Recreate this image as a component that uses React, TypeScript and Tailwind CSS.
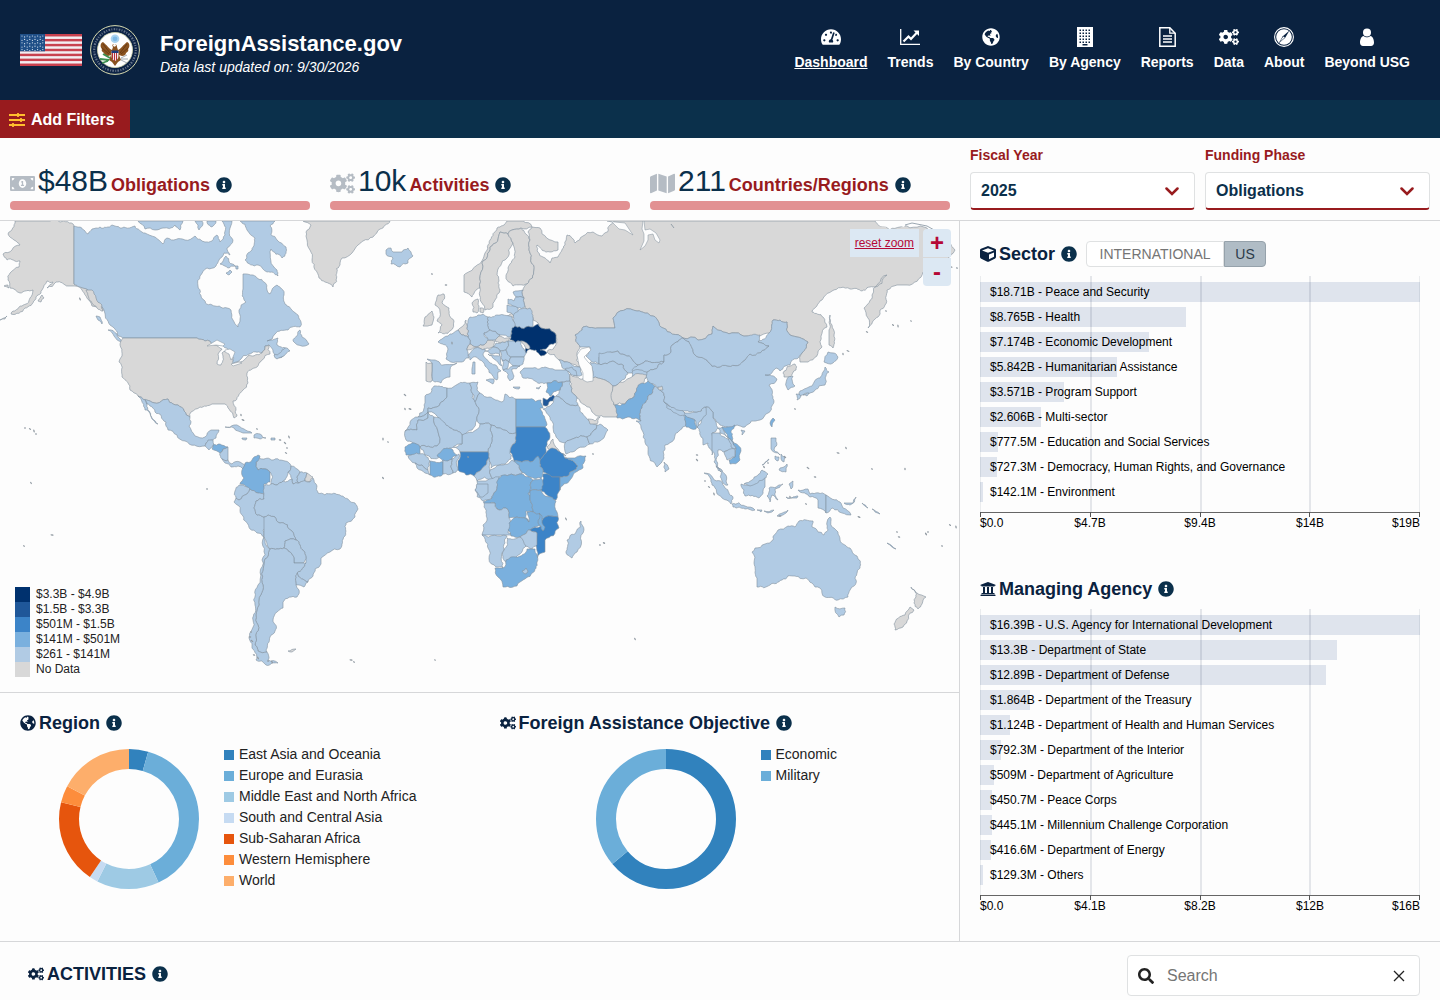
import React from "react";
import {
  FaCogs,
  FaCube,
  FaGlobeAmericas,
  FaInfoCircle,
  FaMap,
  FaMoneyBillAlt,
  FaSearch,
  FaTachometerAlt,
  FaUniversity,
} from "react-icons/fa";

const NONE = "#d8d8d8";
const L1 = "#b1cbe4";
const L2 = "#7ab0de";
const L3 = "#3c84c8";
const L4 = "#1f5799";
const L5 = "#00316e";

// [fill, outline]
const countries: [string, string][] = [
  // north america
  [NONE, "15,221 8,234 14,240 20,245 12,250 3,254 7,260 20,261 19,267 10,273 8,280 10,288 20,293 33,290 30,298 22,306 11,314 25,308 35,300 42,290 47,281 53,282 47,288 56,282 68,286 75,286 82,290 86,296 92,306 103,311 103,304 92,292 85,288 74,284 74,226 60,222 50,221"],
  [NONE, "0,320 7,316 5,319"],
  [NONE, "38,301 42,295 44,298 41,302"],
  [NONE, "4,286 8,285 9,288"],
  [L1, "74,226 85,231 88,234 92,229 100,227 112,225 120,228 135,226 145,233 155,237 163,244 167,238 185,240 195,236 205,242 212,241 217,235 220,242 225,235 222,221 232,221 233,240 227,248 230,255 224,253 219,260 216,266 207,268 200,276 198,286 204,300 215,306 231,310 233,320 238,327 240,319 239,310 246,302 243,289 243,274 253,275 264,282 267,290 270,294 277,285 284,295 287,306 294,312 301,322 300,327 288,330 275,334 267,341 278,338 277,345 288,350 276,358 273,352 269,345 265,346 262,353 249,354 240,360 230,363 234,358 228,349 214,345 205,341 197,338 123,338 118,336 110,325 104,310 98,303 88,290 80,287 74,284"],
  [L1, "240,221 275,221 270,226 277,240 286,247 282,258 271,249 277,270 278,276 267,272 258,265 245,260 252,250 255,238 247,230"],
  [L1, "138,221 145,229 155,230 163,228 175,225 180,230 183,221"],
  [L1, "195,221 199,230 203,224 202,221"],
  [L1, "207,221 211,227 216,221"],
  [L1, "220,264 226,256 235,266 228,268"],
  [L1, "226,273 230,270 232,272 229,275"],
  [L1, "235,266 238,266 238,269 236,269"],
  [L1, "293,341 300,330 302,337 309,344 305,346 295,343"],
  [L1, "274,355 285,348 290,351 277,359"],
  [L1, "108,330 117,334 122,342 114,336"],
  [L1, "96,316 100,317 102,324 98,320"],
  [NONE, "86,290 92,290 96,298 102,305 103,311 97,308 92,303"],
  [NONE, "123,338 197,338 205,341 214,345 222,349 218,354 217,364 221,365 222,353 229,352 233,360 232,365 240,362 249,355 262,353 265,346 269,345 270,354 262,360 252,369 247,373 248,383 243,390 233,401 236,410 237,416 234,418 229,409 225,404 212,404 200,407 191,412 190,417 184,411 178,405 173,404 168,399 150,401 138,396 130,390 122,377 119,362 120,345"],
  [L1, "138,396 150,401 168,399 173,404 178,405 184,411 190,417 189,426 195,436 205,437 211,430 219,430 216,438 209,441 205,446 185,441 168,430 166,422 155,412 150,406 145,400 150,412 158,424 153,420 145,410"],
  [L1, "205,446 208,440 213,440 214,445 209,450"],
  [L2, "213,445 220,444 228,447 220,453 212,449"],
  [L1, "220,453 228,447 228,460 222,459"],
  [L1, "222,459 228,460 232,464 240,462 245,465 243,469 238,466 231,467 225,463"],
  [L1, "225,427 234,425 244,429 252,433 243,433 234,428"],
  [L1, "254,435 260,434 266,438 260,439 254,438"],
  [L1, "271,438 275,438 275,440 271,440"],
  [L1, "242,438 247,438 246,440 242,439"],
  [NONE, "303,221 311,225 306,232 307,240 310,250 312,260 319,278 325,282 333,287 336,275 340,263 342,258 352,253 358,245 363,241 380,229 390,221"],
  // south america
  [L1, "258,457 256,462 258,470 270,472 271,484 277,485 283,481 286,478 288,472 291,466 285,461 270,459"],
  [L2, "258,455 252,460 245,463 244,478 240,484 250,490 258,493 265,494 264,484 270,482 270,472 258,470 256,462 260,456"],
  [L1, "291,466 288,472 292,479 293,484 299,483 297,477 300,472"],
  [L1, "300,472 297,477 299,483 305,481 307,473"],
  [NONE, "307,473 313,477 310,482 305,481"],
  [L1, "239,485 235,491 236,498 239,500 247,494 250,489 243,485"],
  [L1, "250,489 258,493 264,494 264,499 256,501 254,508 257,515 264,517 266,525 264,537 250,529 243,516 234,502 236,498 239,500 247,494"],
  [L1, "265,485 271,484 277,485 283,481 292,479 293,484 299,483 310,482 313,478 317,486 318,493 332,494 344,497 355,503 358,509 355,517 346,523 345,536 340,549 330,552 321,558 321,564 313,576 308,582 297,573 306,563 306,557 300,545 296,540 292,531 280,523 275,517 268,515 264,517 257,515 254,508 256,501 264,499"],
  [L1, "264,517 268,515 275,517 280,523 292,531 296,540 285,541 284,548 270,549 267,544 264,537"],
  [L1, "296,540 285,541 284,548 294,558 294,563 303,563 306,557 300,545"],
  [L1, "297,573 308,582 304,587 296,585"],
  [L1, "270,549 284,548 294,558 294,563 303,563 306,563 297,573 296,585 299,590 297,597 283,602 283,608 277,612 273,620 275,631 270,637 266,650 267,652 258,651 255,645 258,625 259,605 263,585 264,563 268,556"],
  [L1, "264,537 266,545 270,549 268,556 264,563 263,585 259,605 258,625 255,645 258,651 267,652 268,660 278,663 266,665 256,660 252,646 249,638 253,620 255,605 258,585 262,560"],
  [NONE, "288,651 296,649 292,652"],
  [L1, "386,250 391,248 393,252 402,252 408,248 413,256 408,263 400,267 391,264 393,258 386,254"],
  // europe
  [NONE, "464,275 464,292 472,297 480,288 482,263 490,247 500,232 508,234 512,230 521,228 532,227 523,221 507,221 497,228 490,240 485,253 476,266"],
  [NONE, "480,288 482,263 490,247 500,232 508,234 513,243 507,258 497,275 498,283 500,290 495,300 493,307 485,310 482,303"],
  [NONE, "508,234 512,230 521,228 530,240 529,250 531,262 534,270 527,284 513,286 507,280 508,268 515,257 513,243"],
  [NONE, "472,303 478,299 479,306 477,313 473,312"],
  [NONE, "480,308 484,309 483,313 480,312"],
  [NONE, "438,295 444,294 442,303 449,308 454,321 450,331 438,333 442,325 437,321 440,312 435,305"],
  [NONE, "425,317 432,311 434,317 432,325 423,326"],
  [NONE, "525,307 524,298 523,290 527,284 534,270 531,262 529,250 530,240 528,232 532,227 540,228 558,242 558,250 550,252 537,245 543,257 550,263 552,258 558,257 565,245 567,235 575,243 583,236 593,232 602,236 610,225 614,221 875,221 880,226 900,227 927,228 945,240 955,250 945,262 923,272 907,285 897,285 887,290 885,305 878,317 868,328 864,308 872,295 887,275 873,287 862,291 850,289 832,291 822,300 812,312 823,317 827,327 822,347 808,362 800,362 802,353 808,342 790,335 787,322 773,320 769,333 747,336 723,332 713,326 712,334 683,338 663,328 653,316 637,311 613,318 615,328 597,328 583,327 575,335 580,347 577,353 580,367 560,360 547,352 557,343 556,335 541,328 533,320"],
  [NONE, "830,315 832,325 834,335 833,348 829,345 829,330"],
  [NONE, "507,316 513,313 515,316 508,318"],
  [L1, "513,292 523,290 524,298 516,297"],
  [L1, "508,304 508,299 514,301 516,297 524,298 525,307 518,308"],
  [L1, "507,305 518,308 520,313 514,316 507,312"],
  [L1, "513,320 520,309 530,308 533,320 533,327 515,326"],
  [L1, "488,317 500,315 512,317 514,328 511,337 500,335 490,330"],
  [L1, "470,317 478,315 488,317 490,330 484,333 490,340 484,345 470,344 468,337 467,325"],
  [NONE, "458,330 466,320 467,325 468,337 462,335"],
  [L1, "440,340 448,336 458,330 462,335 468,337 470,344 467,350 469,358 462,362 456,362 446,359 448,349 438,342"],
  [L1, "432,363 427,359 457,363 450,370 450,377 441,383 435,382 432,380"],
  [NONE, "426,362 432,363 432,371 431,382 426,381"],
  [NONE, "467,350 470,344 484,345 488,340 495,341 493,347 485,349 475,348"],
  [L1, "484,333 490,330 500,335 494,340 488,340"],
  [NONE, "495,341 500,336 510,338 509,341 500,343"],
  [L1, "468,355 475,348 485,349 483,355 490,363 501,371 498,372 497,380 494,378 485,366 476,357 470,360"],
  [L1, "486,380 494,379 493,384"],
  [L1, "473,362 475,362 475,374 472,374"],
  [L1, "493,347 496,343 508,341 506,350 500,351"],
  [L1, "485,351 493,347 500,351 500,355 491,354"],
  [L1, "488,354 500,355 502,366 494,359"],
  [L1, "500,351 506,350 511,357 509,362 502,360"],
  [L1, "502,360 509,362 508,367 503,370"],
  [L1, "508,341 521,341 527,352 524,357 511,357 506,350"],
  [L1, "511,357 524,357 523,364 513,366 509,362"],
  [L1, "503,370 513,366 520,366 512,369 514,376 510,381"],
  [L1, "513,387 520,387 519,389 514,388"],
  [L1, "536,388 541,386 539,389"],
  [L5, "512,328 515,326 533,327 538,324 541,328 556,335 556,343 546,349 540,350 547,353 541,356 536,350 530,349 526,353 527,346 521,341 510,340 511,335"],
  [NONE, "521,341 525,342 530,348 527,349"],
  // middle east, central asia
  [L1, "520,372 524,368 533,368 545,367 555,370 567,370 570,381 562,382 547,383 535,381 523,378"],
  [L1, "559,360 580,367 582,375 577,376 567,370"],
  [L1, "565,369 572,367 577,376 570,373"],
  [L1, "575,335 583,327 597,328 615,328 613,318 637,311 653,316 663,328 683,338 672,345 671,352 664,355 664,362 645,361 638,365 625,355 610,352 599,357 599,364 592,362 586,356 590,347 580,347"],
  [L1, "599,364 599,353 610,352 625,355 638,365 635,373 628,373 615,362"],
  [L1, "590,362 599,364 615,362 628,373 620,382 613,386 605,380 592,377"],
  [L1, "638,365 645,361 664,362 655,369 647,372 636,376 632,370"],
  [L1, "632,372 640,370 648,373 646,378 634,380"],
  [NONE, "570,374 580,379 592,377 605,380 613,386 613,400 617,417 605,417 592,412 585,405 577,398 571,387"],
  [NONE, "613,386 620,382 630,378 647,375 640,386 634,397 625,404 614,405"],
  [L2, "617,418 615,405 625,404 634,397 640,384 648,381 655,386 648,396 642,408 641,421 636,418 628,417"],
  [L1, "562,382 570,381 571,387 577,398 578,405 568,404 556,396 560,390"],
  [L2, "547,383 562,382 560,390 550,396 546,392"],
  [L4, "543,398 547,400 553,395 555,398 549,402 547,406 543,405"],
  [L1, "543,409 552,404 556,396 568,404 578,405 580,411 588,420 597,425 587,437 575,438 565,443 553,427"],
  [NONE, "588,419 595,421 600,417 597,424 590,424"],
  [L1, "565,443 575,438 587,437 590,444 575,451 566,454"],
  [L1, "587,437 597,425 600,424 608,430 600,441 590,444"],
  // south and east asia
  [L1, "641,421 636,421 641,428 643,432 648,452 657,467 664,458 665,445 680,430 686,425 685,417 695,420 697,428 703,420 712,412 706,407 695,412 685,413 664,402 660,390 655,386 648,396 642,408"],
  [L2, "685,415 695,420 696,429 686,427"],
  [L1, "664,402 685,413 684,416 672,411"],
  [L1, "664,462 669,469 665,472"],
  [L1, "683,338 692,348 695,355 708,362 728,366 745,360 750,354 769,346 758,342 769,333 773,320 787,322 790,335 808,342 802,353 799,357 790,365 780,371 776,368 765,375 777,379 769,385 772,395 774,402 768,413 760,420 745,427 737,425 727,427 720,425 713,418 713,412 706,407 695,412 685,411 664,402 660,390 648,381 647,372 655,369 664,362 664,355 671,352 672,345"],
  [NONE, "658,387 662,386 663,390 659,390"],
  [L1, "683,338 712,334 713,326 723,332 747,336 760,335 758,342 769,346 750,354 745,360 728,366 708,362 695,355 692,348"],
  [NONE, "783,373 795,364 796,370 790,377 784,377"],
  [L1, "787,379 793,376 795,386 788,390"],
  [L1, "828,352 838,357 833,363 824,362"],
  [L1, "825,367 829,372 825,385 815,390 806,393 799,395 800,391 812,386 820,378 823,372"],
  [L1, "796,394 801,396 797,400"],
  [L1, "803,395 809,393 807,396"],
  [L2, "773,418 775,420 772,427 770,423"],
  [L1, "741,430 745,431 742,435"],
  [L1, "706,407 713,412 713,418 718,428 712,433 714,445 712,455 708,443 703,445 700,432 697,427 703,418"],
  [L1, "712,433 720,433 731,440 733,449 724,452 718,450 716,460 721,472 714,462 712,450"],
  [L1, "718,428 723,427 728,437 736,449 731,447 728,438 720,433"],
  [L2, "722,427 735,425 731,431 734,443 741,451 740,460 730,464 729,460 735,457 736,449 728,437"],
  [L1, "724,452 735,449 735,457 727,460"],
  [L1, "716,466 722,470 728,485 722,481"],
  [L1, "704,473 713,478 725,488 733,497 731,504 722,498 712,485"],
  [L1, "732,504 745,506 755,510 745,509 733,507"],
  [L1, "757,510 762,510 761,512"],
  [L1, "764,511 774,510 772,512"],
  [L1, "777,516 788,510 783,515"],
  [L1, "786,497 798,496 797,498 788,498"],
  [L1, "741,484 750,485 765,476 765,487 759,498 745,496"],
  [L1, "744,484 752,480 762,470 768,474 763,480 750,486"],
  [L1, "769,488 783,484 775,489 778,500 772,495 770,502 767,496"],
  [L1, "771,438 776,438 774,450 780,455 771,449"],
  [L1, "775,456 779,457 778,461 775,459"],
  [L1, "781,454 785,457 784,462 781,459"],
  [L1, "762,465 769,459 765,463"],
  [L1, "780,468 787,464 786,472 779,470"],
  [L1, "789,484 793,481 791,489"],
  [L1, "798,490 808,489 810,494 826,495 826,513 818,508 818,500 810,497"],
  [L1, "826,495 840,502 843,508 851,515 842,513 832,508 826,513"],
  [L1, "844,503 853,503 856,497 850,505"],
  [L1, "862,503 868,508 865,506"],
  [L1, "872,509 880,514 875,512"],
  [L1, "887,543 896,549 892,547"],
  // oceania
  [L1, "755,548 765,544 773,540 778,530 788,526 795,527 799,521 806,520 813,521 812,527 818,532 824,535 828,530 827,522 830,517 834,528 838,532 840,540 850,548 857,556 860,568 856,580 850,590 848,597 838,600 825,597 820,588 815,587 812,583 806,578 795,576 782,580 770,585 757,587 757,578 754,563 752,552"],
  [L1, "835,607 845,608 844,615 839,617"],
  [NONE, "911,587 917,593 926,597 922,604 918,609 914,603 916,597"],
  [NONE, "910,607 914,610 903,627 895,630 894,624 905,615"],
  // africa
  [L1, "434,386 447,388 447,397 428,408 428,412 418,417 425,403 425,396"],
  [L1, "418,417 428,412 428,418 418,420 417,430 405,431 410,422"],
  [L1, "405,431 417,430 418,420 428,418 428,412 434,417 437,446 420,447 413,443 406,440"],
  [L1, "447,388 458,384 470,383 471,390 476,404 477,420 462,435 450,428 428,412 428,408 447,397"],
  [L1, "470,383 478,382 477,390 480,393 475,402 471,390"],
  [L1, "475,402 480,393 490,397 502,402 505,394 516,399 516,433 491,425 480,424 477,420 476,404"],
  [L2, "516,399 530,399 541,400 543,408 540,408 547,425 545,427 516,427"],
  [L3, "516,427 545,427 550,436 547,442 546,453 540,460 530,462 514,461 510,452 515,443 516,433"],
  [NONE, "547,447 553,439 558,449 566,456 555,451"],
  [L3, "546,453 552,448 560,452 565,458 578,466 568,476 560,477 552,477 543,472 540,460"],
  [L3, "543,474 552,477 560,477 560,490 556,500 547,495 541,490"],
  [L2, "565,458 575,458 586,456 583,468 570,480 560,490 560,477 568,476 578,466"],
  [L2, "514,461 530,462 538,456 540,460 543,472 541,478 530,477 520,470"],
  [L1, "491,425 516,433 515,443 510,452 511,459 500,465 491,468 489,458 488,452 492,440"],
  [L1, "462,435 480,424 491,425 492,440 488,452 475,452 460,452 453,447 462,444"],
  [L1, "434,417 450,428 462,435 462,444 450,448 442,452 438,458 425,455 420,447 437,446"],
  [L3, "460,452 475,452 488,452 489,458 481,470 474,476 466,475 458,470 458,461"],
  [L2, "405,447 412,443 420,447 420,455 406,455"],
  [L1, "408,456 425,455 430,461 428,470 422,465 415,463"],
  [L1, "415,463 422,465 428,470 430,475 425,473 417,468"],
  [L2, "430,461 443,462 443,474 430,475"],
  [L2, "437,456 447,448 457,455 452,459 443,462"],
  [L1, "443,460 452,459 453,473 443,474"],
  [L1, "452,459 459,454 458,470 453,473"],
  [L1, "474,476 481,470 489,458 490,470 493,479 477,481"],
  [L1, "490,470 500,465 512,460 522,474 505,475 497,479 493,479"],
  [L1, "477,481 486,481 499,477 497,487 492,498 483,501 475,490"],
  [L1, "477,484 488,484 488,493 480,497 475,490"],
  [L2, "499,478 505,475 522,474 533,480 530,491 530,500 533,512 526,511 529,522 517,517 509,518 506,508 497,509 495,503 483,502 492,498 497,487"],
  [L2, "533,480 541,478 543,483 541,490 530,491"],
  [L1, "528,493 532,492 531,499"],
  [L2, "530,491 541,490 556,501 557,512 558,517 543,519 533,512 530,500"],
  [L1, "484,503 495,503 497,509 506,508 509,518 508,533 513,535 482,535 483,525 487,518"],
  [L2, "509,523 517,517 529,522 527,512 540,514 541,524 530,530 520,537 511,536 508,530"],
  [L3, "543,519 558,517 559,528 545,540 545,552 537,558 535,545 537,533 530,530 541,526"],
  [L2, "539,513 542,516 542,523 545,527 543,531 541,526 538,523"],
  [L1, "520,537 530,530 537,533 537,545 532,549 524,545"],
  [L1, "507,538 520,537 526,546 516,557 506,562 504,550"],
  [L1, "482,535 507,536 504,550 503,568 496,567 488,548"],
  [L2, "495,568 503,568 506,560 516,557 527,549 535,549 537,562 532,573 520,582 503,587 498,577"],
  [L1, "522,571 526,568 528,571 525,574"],
  [L1, "581,521 584,530 577,552 572,558 566,553 567,540 576,532"],
];

// small islands, drawn as dots
const islands =
  "25,428 30,429 34,431 36,434 31,483 52,535 24,546 241,415 243,420 257,429 280,440 285,443 287,448 286,453 289,437 207,489 383,478 383,439 388,442 405,409 410,409 432,274 446,285 405,395 600,545 604,543 566,519 468,457 893,325 898,326 911,321 846,448 838,453 872,469 905,469 808,468 897,532 899,537 926,534 928,532 950,525 956,527 942,546 635,639 351,660 354,662 843,354 848,351 795,409 697,455 697,460 705,481 709,487 714,494 768,463 764,467 780,516 806,504 790,497 859,517 886,311 815,477 785,457 593,454 867,332 80,299 268,661 272,662 452,343 435,660 925,260 951,267 957,268 250,637 252,641 251,632 254,655 258,658";

type Point = [number, number];

const toPoints = (s: string): Point[] => s.split(" ").map((p) => p.split(",").map(Number) as Point);

// Splits an edge with a fixed offset per end pair, so neighbours share the same border.
function splitEdge(a: Point, b: Point, depth: number): Point[] {
  const dx = b[0] - a[0];
  const dy = b[1] - a[1];
  const len = Math.hypot(dx, dy);
  if (depth === 0 || len < 3 || len > 60 || dx === 0 || dy === 0) return [b];
  const seed = Math.sin((a[0] + b[0]) * 12.9898 + (a[1] + b[1]) * 78.233) * 43758.5453;
  const k = (seed - Math.floor(seed) - 0.5) * 0.36 * (a[0] < b[0] ? 1 : -1);
  const mid: Point = [(a[0] + b[0]) / 2 - dy * k, (a[1] + b[1]) / 2 + dx * k];
  return [...splitEdge(a, mid, depth - 1), ...splitEdge(mid, b, depth - 1)];
}

function outline(s: string) {
  const pts = toPoints(s);
  const out = pts.flatMap((p, i) => splitEdge(p, pts[(i + 1) % pts.length], 3));
  return "M" + out.map((p) => p[0].toFixed(1) + " " + p[1].toFixed(1)).join("L") + "Z";
}

const shapes = countries.map(([fill, s]) => ({ fill, d: outline(s) }));
const dots = toPoints(islands);

const mapLegend = [
  { label: "$3.3B - $4.9B", color: "bg-[#00316e]" },
  { label: "$1.5B - $3.3B", color: "bg-[#1f5799]" },
  { label: "$501M - $1.5B", color: "bg-[#3c84c8]" },
  { label: "$141M - $501M", color: "bg-[#7ab0de]" },
  { label: "$261 - $141M", color: "bg-[#b1cbe4]" },
  { label: "No Data", color: "bg-[#d8d8d8]" },
];

const sectors = [
  { label: "$18.71B - Peace and Security", value: 18.71 },
  { label: "$8.765B - Health", value: 8.765 },
  { label: "$7.174B - Economic Development", value: 7.174 },
  { label: "$5.842B - Humanitarian Assistance", value: 5.842 },
  { label: "$3.571B - Program Support", value: 3.571 },
  { label: "$2.606B - Multi-sector", value: 2.606 },
  { label: "$777.5M - Education and Social Services", value: 0.7775 },
  { label: "$727.3M - Democracy, Human Rights, and Governance", value: 0.7273 },
  { label: "$142.1M - Environment", value: 0.1421 },
];

const agencies = [
  { label: "$16.39B - U.S. Agency for International Development", value: 16.39 },
  { label: "$13.3B - Department of State", value: 13.3 },
  { label: "$12.89B - Department of Defense", value: 12.89 },
  { label: "$1.864B - Department of the Treasury", value: 1.864 },
  { label: "$1.124B - Department of Health and Human Services", value: 1.124 },
  { label: "$792.3M - Department of the Interior", value: 0.7923 },
  { label: "$509M - Department of Agriculture", value: 0.509 },
  { label: "$450.7M - Peace Corps", value: 0.4507 },
  { label: "$445.1M - Millennium Challenge Corporation", value: 0.4451 },
  { label: "$416.6M - Department of Energy", value: 0.4166 },
  { label: "$129.3M - Others", value: 0.1293 },
];

const regions = [
  { label: "East Asia and Oceania", color: "#3182bd", deg: 16 },
  { label: "Europe and Eurasia", color: "#6baed9", deg: 139 },
  { label: "Middle East and North Africa", color: "#9ecae4", deg: 52 },
  { label: "South and Central Asia", color: "#c6dbf2", deg: 7 },
  { label: "Sub-Saharan Africa", color: "#e6550d", deg: 70 },
  { label: "Western Hemisphere", color: "#fd8d3c", deg: 14 },
  { label: "World", color: "#fdae6b", deg: 62 },
];

const objectives = [
  { label: "Economic", color: "#3182bd", deg: 230 },
  { label: "Military", color: "#6baed9", deg: 130 },
];

function Flag() {
  return (
    <svg viewBox="0 0 62 32" className="h-8 w-[62px]" aria-hidden="true">
      <rect width="62" height="32" fill="#f3eef2" />
      {[0, 1, 2, 3, 4, 5, 6].map((i) => (
        <rect key={i} y={(i * 64) / 13} width="62" height={32 / 13} fill="#c8414f" />
      ))}
      <rect width="25" height="17.3" fill="#1f4f87" />
      {Array.from({ length: 45 }, (_, i) => (
        <circle key={i} cx={2 + (i % 9) * 2.6} cy={2 + Math.floor(i / 9) * 3.4 + (i % 2) * 0.9} r="0.6" fill="#dbe6f2" />
      ))}
    </svg>
  );
}

function Seal() {
  return (
    <svg viewBox="0 0 50 50" className="h-[50px] w-[50px]" aria-hidden="true">
      <circle cx="25" cy="25" r="24.4" fill="#0c2345" stroke="#d9dcb0" strokeWidth="1" />
      <circle cx="25" cy="25" r="20.8" fill="none" stroke="#66748a" strokeWidth="2.2" strokeDasharray="1 1.4 1.6 1.2" />
      <circle cx="25" cy="25" r="17.5" fill="#fff" stroke="#d9dcb0" strokeWidth="0.8" />
      <circle cx="25" cy="13.8" r="4.3" fill="#a9d3f0" />
      <circle cx="25" cy="13.8" r="2.4" fill="#7db9e6" />
      <path d="M24 19c-2 0-2 2-1 3l-1 3c-3-1-5-5-9-8-3 1-3 5-1 7-1 1 0 3 2 4 0 2 2 3 4 3l3-1-2 5 3 2h6l3-2-2-5 3 1c2 0 4-1 4-3 2-1 3-3 2-4 2-2 2-6-1-7-4 3-6 7-9 8l-1-3c0-2-1-3-3-3z" fill="#8a5320" />
      <path d="M13 19l7 9M12 23l7 6M37 19l-7 9M38 23l-7 6" stroke="#5f3512" strokeWidth="0.8" fill="none" />
      <path d="M21.5 26h7v5c0 3-2 4-3.5 5-1.5-1-3.5-2-3.5-5z" fill="#f5e9e9" />
      <path d="M22.5 28v6M24.5 28v8M26.5 28v7" stroke="#b5303a" strokeWidth="1" />
      <path d="M21.5 25.5h7V28h-7z" fill="#1e3d7b" />
      <path d="M20 33l-7-4M19 35l-9-1M18 36l-6 2" stroke="#3e9152" strokeWidth="1.8" />
      <path d="M31 33l6-3M31 34h7M31 35l6 3" stroke="#8b95a0" strokeWidth="0.8" />
      <path d="M22 37l3 4 3-4" fill="#8a5320" />
      <circle cx="24.5" cy="20.3" r="1.4" fill="#fff" />
    </svg>
  );
}

function TrendsIcon() {
  return (
    <svg viewBox="0 0 20 16" className="h-4 w-5" fill="none" aria-hidden="true">
      <path d="M.7 0v15.3H20" stroke="currentColor" strokeWidth="1.3" />
      <path d="M3.5 12.5l5-5L11 10l6-6.5" stroke="currentColor" strokeWidth="2.2" />
      <path d="M13.5 1.5H19V7z" fill="currentColor" />
    </svg>
  );
}

function BuildingIcon() {
  return (
    <svg viewBox="0 0 16 20" className="h-5 w-4" aria-hidden="true">
      <path d="M0 0h16v20H0z" fill="currentColor" />
      {[2.5, 5.5, 8.5, 11.5, 14.5].map((y) =>
        [2.5, 5.5, 8.5, 11.5].map((x) => (
          <rect key={x + "-" + y} x={x} y={y} width="1.5" height="1.5" fill="#0a2240" />
        ))
      )}
      <path d="M5.500 17h5v1.500h-5z" fill="#0a2240" />
    </svg>
  );
}

function ReportIcon() {
  return (
    <svg viewBox="0 0 17 20" className="h-5 w-[17px]" fill="none" stroke="currentColor" aria-hidden="true">
      <path d="M.8.8h10l5.4 5.4v13H.8z" strokeWidth="1.5" />
      <path d="M10.8.8v5.400h5.400" strokeWidth="1.3" />
      <path d="M4 9h9M4 12h9M4 15h9" strokeWidth="1.3" />
    </svg>
  );
}

function CompassIcon() {
  return (
    <svg viewBox="0 0 20 20" className="h-5 w-5" aria-hidden="true">
      <circle cx="10" cy="10" r="9.4" fill="none" stroke="currentColor" strokeWidth="1.1" />
      <circle cx="10" cy="10" r="7.8" fill="currentColor" />
      <path d="M15.500 3.500l-4.300 7.300-6.700 5.700 4.300-7.300z" fill="#0a2240" />
      <path d="M10.800 10.500l-5 4.500 3.500-5.500z" fill="currentColor" />
    </svg>
  );
}

function PersonIcon() {
  return (
    <svg viewBox="0 0 14 18" className="h-[18px] w-3.5" fill="currentColor" aria-hidden="true">
      <circle cx="7" cy="4.5" r="4" />
      <path d="M3.5 8C1 8.500 0 12 0 14.500 0 16.500 1.200 18 3 18h8c1.800 0 3-1.500 3-3.500 0-2.500-1-6-3.500-6.500-2 1.800-5 1.800-7 0z" />
    </svg>
  );
}

function FiltersIcon() {
  return (
    <svg viewBox="0 0 16 14" className="h-3.5 w-4" stroke="#ffbe2e" strokeWidth="1.8" aria-hidden="true">
      <path d="M0 2h16M0 7h16M0 12h16M9 0v4M12 5v4M4 10v4" />
    </svg>
  );
}

const navItems = [
  { label: "Dashboard", icon: <FaTachometerAlt size={20} /> },
  { label: "Trends", icon: <TrendsIcon /> },
  { label: "By Country", icon: <FaGlobeAmericas size={18} /> },
  { label: "By Agency", icon: <BuildingIcon /> },
  { label: "Reports", icon: <ReportIcon /> },
  { label: "Data", icon: <FaCogs size={20} /> },
  { label: "About", icon: <CompassIcon /> },
  { label: "Beyond USG", icon: <PersonIcon /> },
];

function Header() {
  return (
    <header className="flex h-[100px] items-center justify-between bg-[#0a2240] pr-[30px] pl-5 text-white">
      <div className="flex items-center">
        <Flag />
        <div className="ml-2">
          <Seal />
        </div>
        <div className="ml-5 pt-2">
          <h1 className="text-[22px] leading-[26px] font-bold">ForeignAssistance.gov</h1>
          <p className="text-sm leading-5 italic">Data last updated on: 9/30/2026</p>
        </div>
      </div>
      <nav className="flex gap-5 pb-0.5">
        {navItems.map((item, i) => (
          <a key={item.label} href="#" className="flex flex-col items-center gap-[5px] text-sm leading-5 font-bold">
            <span className="flex h-5 items-center">{item.icon}</span>
            <span className={i === 0 ? "underline" : ""}>{item.label}</span>
          </a>
        ))}
      </nav>
    </header>
  );
}

function InfoButton({ label }: { label: string }) {
  return (
    <button type="button" aria-label={"About " + label} className="ml-[6px] text-[#0b304b]">
      <FaInfoCircle size={16} />
    </button>
  );
}

function Heading({ icon, children }: { icon: React.ReactNode; children: string }) {
  return (
    <div className="flex h-7 items-center text-[#0a2240]">
      {icon}
      <h2 className="ml-[3px] text-lg font-bold">{children}</h2>
      <InfoButton label={children} />
    </div>
  );
}

function Stat({ icon, value, label }: { icon: React.ReactNode; value: string; label: string }) {
  return (
    <div className="flex-1">
      <div className="flex h-9 items-center">
        <span className="pt-1 text-[#b5bcc4]">{icon}</span>
        <div className="ml-[3px] flex items-baseline gap-[3px]">
          <span className="text-[30px] leading-9 text-[#0b304b]">{value}</span>
          <span className="text-lg leading-6 font-bold text-[#981b1e]">{label}</span>
        </div>
        <span className="flex pt-2">
          <InfoButton label={label} />
        </span>
      </div>
      <div className="mt-0.5 h-[9px] rounded bg-[#e29192]" />
    </div>
  );
}

function Select({ id, label, value }: { id: string; label: string; value: string }) {
  return (
    <div className="flex-1">
      <label htmlFor={id} className="block text-sm leading-5 font-bold text-[#981b1e]">
        {label}
      </label>
      <div className="relative mt-[7px]">
        <select
          id={id}
          className="h-[38px] w-full appearance-none rounded border border-b-2 border-[#dfe1e2] border-b-[#981b1e] bg-white px-2.5 text-base font-bold text-[#0b304b]"
        >
          <option>{value}</option>
        </select>
        <svg viewBox="0 0 14 9" className="pointer-events-none absolute top-[15px] right-4 h-[9px] w-3.5" fill="none" aria-hidden="true">
          <path d="M1.5 1.5L7 7l5.5-5.5" stroke="#981b1e" strokeWidth="2.5" strokeLinecap="round" />
        </svg>
      </div>
    </div>
  );
}

function WorldMap() {
  return (
    <div className="relative border-b border-[#d6d7d9]">
      <svg viewBox="0 221 959 471" className="block w-full" role="img" aria-label="Obligations by country">
        <g stroke="#82909d" strokeWidth="0.6" strokeLinejoin="round">
          {shapes.map((s, i) => (
            <path key={i} d={s.d} fill={s.fill} />
          ))}
        </g>
        <g fill="#929ba3">
          {dots.map(([x, y], i) => (
            <ellipse key={i} cx={x} cy={y} rx={1 + (i % 3) * 0.3} ry="0.7" transform={`rotate(${(i * 37) % 90} ${x} ${y})`} />
          ))}
        </g>
        {/* Caspian and White seas, Ob gulf, great lakes, arctic coast */}
        <g fill="#fdfdfd" stroke="#82909d" strokeWidth="0.5" strokeLinejoin="round">
          <path d="M577 355l4-6 8-2 2 3-4 4-3 3 4 5 4 4 1 8 0 7-6 1-4-2 0-7-4-8z" />
          <path d="M644 221l1 9 5-1 6 4 4 7-1 3-4-3-2-6-5 1 0 5-3 6-5 4 4-9 0-7-2-5 1-8z" />
          <path d="M607 221l8 1 10 1 8 12-8-5-6-1-7-7z" />
          <path d="M207 346l10-6 8 4-2 2-7-1z" />
          <path d="M225 350l5-1 5 3-2 5-2 3-2-6-4-2z" />
          <path d="M231 364l8-2 3 1-9 3z" />
          <path d="M876 221h83v9l-12-1-16-6-17-1-8 2-2 3-8-2-8 2-8-1z" stroke="none" />
        </g>
        <path d="M671 224l3 4M905 225l7-2 15 3 9 5" stroke="#82909d" strokeWidth="0.8" fill="none" />
      </svg>
      <ul className="absolute bottom-[15px] left-[15px] text-xs leading-[15px] text-[#222]">
        {mapLegend.map((item) => (
          <li key={item.label} className="flex gap-[6px]">
            <span className={"h-[15px] w-[15px] " + item.color} />
            {item.label}
          </li>
        ))}
      </ul>
      <div className="absolute top-2 right-2 flex items-start gap-1 text-[#b50836]">
        <button type="button" className="h-7 bg-[#dce8f3] px-[5px] text-xs underline">
          reset zoom
        </button>
        <div className="flex flex-col gap-px text-2xl leading-7 font-bold">
          <button type="button" aria-label="Zoom in" className="h-7 w-7 rounded-t bg-[#dce8f3]">
            +
          </button>
          <button type="button" aria-label="Zoom out" className="h-7 w-7 rounded-b bg-[#dce8f3]">
            -
          </button>
        </div>
      </div>
    </div>
  );
}

type Slice = { label: string; color: string; deg: number };

function Donut({ slices }: { slices: Slice[] }) {
  let start = 0;
  return (
    <svg viewBox="0 0 140 140" className="h-[140px] w-[140px] shrink-0 -rotate-90" fill="none" aria-hidden="true">
      {slices.map((s) => {
        const offset = -start;
        start += s.deg;
        return (
          <circle key={s.label} cx="70" cy="70" r="60" stroke={s.color} strokeWidth="20" pathLength={360} strokeDasharray={`${s.deg} ${360 - s.deg}`} strokeDashoffset={offset} />
        );
      })}
    </svg>
  );
}

function Legend({ slices }: { slices: Slice[] }) {
  return (
    <ul className="ml-[25px] -mt-[5px] text-sm leading-[21px] text-[#222]">
      {slices.map((s) => (
        <li key={s.label} className="flex items-center gap-[5px]">
          <span className="h-2.5 w-2.5" style={{ backgroundColor: s.color }} />
          {s.label}
        </li>
      ))}
    </ul>
  );
}

function BarChart({ rows, ticks }: { rows: { label: string; value: number }[]; ticks: string[] }) {
  const max = rows[0].value;
  const last = ticks.length - 1;
  return (
    <div className="text-xs text-black">
      <div className="relative border-b border-[#666]">
        <ul className="flex flex-col gap-[5px] pt-[6px] pb-2.5">
          {rows.map((row) => (
            <li key={row.label} className="relative h-5 leading-5 whitespace-nowrap">
              <div className="absolute inset-y-0 left-0 bg-[#dfe4ed]" style={{ width: (row.value / max) * 100 + "%" }} />
              <span className="relative pl-2.5">{row.label}</span>
            </li>
          ))}
        </ul>
        <div className="pointer-events-none absolute inset-x-0 top-0 -bottom-[5px] flex justify-between">
          {ticks.map((t, i) => (
            <div key={t} className="flex w-px flex-col">
              <div className={i === 0 || i === last ? "flex-1 bg-[#0a2240]/8" : "w-0.5 flex-1 bg-[#0a2240]/10"} />
              <div className="h-[5px] w-px bg-[#555]" />
            </div>
          ))}
        </div>
      </div>
      <div className="mt-0.5 flex justify-between leading-4">
        {ticks.map((t, i) => (
          <div key={t} className={i === 0 ? "flex w-0 justify-start" : i === last ? "flex w-0 justify-end" : "flex w-0 justify-center"}>
            {t}
          </div>
        ))}
      </div>
    </div>
  );
}

function App() {
  return (
    <div className="min-h-screen bg-[#fdfdfd] font-['Liberation_Sans',Arial,sans-serif]">
      <Header />
      <div className="flex h-[38px] bg-[#0b304b]">
        <button type="button" className="flex w-[130px] items-center gap-[6px] bg-[#981b1e] pt-0.5 pl-[9px] font-bold text-white">
          <FiltersIcon />
          Add Filters
        </button>
      </div>

      <div className="grid grid-cols-[2fr_1fr] border-b border-[#d6d7d9]">
        <div className="flex gap-5 p-2.5 pt-[25px]">
          <Stat icon={<FaMoneyBillAlt size={25} />} value="$48B" label="Obligations" />
          <Stat icon={<FaCogs size={25} />} value="10k" label="Activities" />
          <Stat icon={<FaMap size={25} />} value="211" label="Countries/Regions" />
        </div>
        <div className="flex gap-2.5 p-2.5 pt-[7px]">
          <Select id="year" label="Fiscal Year" value="2025" />
          <Select id="phase" label="Funding Phase" value="Obligations" />
        </div>
      </div>

      <div className="grid grid-cols-[2fr_1fr] border-b border-[#d6d7d9]">
        <div className="min-w-0 border-r border-[#d6d7d9]">
          <WorldMap />
          <div className="flex">
            <section className="flex-1 pt-4 pl-5">
              <Heading icon={<FaGlobeAmericas size={16} />}>Region</Heading>
              <div className="mt-3 ml-[39px] flex">
                <Donut slices={regions} />
                <Legend slices={regions} />
              </div>
            </section>
            <section className="flex-1 pt-4 pl-5">
              <Heading icon={<FaCogs size={16} />}>Foreign Assistance Objective</Heading>
              <div className="mt-3 ml-24 flex">
                <Donut slices={objectives} />
                <Legend slices={objectives} />
              </div>
            </section>
          </div>
        </div>

        <div className="min-w-0 px-5 pt-[19px] pb-[27px]">
          <section>
            <div className="mb-2 flex items-center">
              <Heading icon={<FaCube size={16} />}>Sector</Heading>
              <div className="ml-[9px] flex h-[26px] text-sm">
                <button type="button" className="w-[138px] rounded-l border border-[#dfe1e2] bg-white text-[#757575]">
                  INTERNATIONAL
                </button>
                <button type="button" aria-pressed="true" className="w-[42px] rounded-r border border-[#96a2ab] bg-[#b0bcc5] text-[#2b3b49]">
                  US
                </button>
              </div>
            </div>
            <BarChart rows={sectors} ticks={["$0.0", "$4.7B", "$9.4B", "$14B", "$19B"]} />
          </section>
          <section className="mt-11 flex flex-col gap-1.5">
            <Heading icon={<FaUniversity size={16} />}>Managing Agency</Heading>
            <BarChart rows={agencies} ticks={["$0.0", "$4.1B", "$8.2B", "$12B", "$16B"]} />
          </section>
        </div>
      </div>

      <div className="flex items-start justify-between pt-[13px] pr-5 pl-7">
        <div className="pt-[5px]">
          <Heading icon={<FaCogs size={16} />}>ACTIVITIES</Heading>
        </div>
        <div className="flex h-[41px] w-[293px] items-center rounded border border-[#dfe1e2] bg-white px-2.5 text-[#222]">
          <FaSearch size={16} />
          <input type="text" aria-label="Search" placeholder="Search" className="ml-[13px] min-w-0 flex-1 text-base outline-none placeholder:text-[#757575]" />
          <button type="button" aria-label="Clear search" className="p-1">
            <svg viewBox="0 0 12 12" className="h-3 w-3" stroke="currentColor" strokeWidth="1.3" aria-hidden="true">
              <path d="M1 1l10 10M11 1L1 11" />
            </svg>
          </button>
        </div>
      </div>
    </div>
  );
}

export default App;
